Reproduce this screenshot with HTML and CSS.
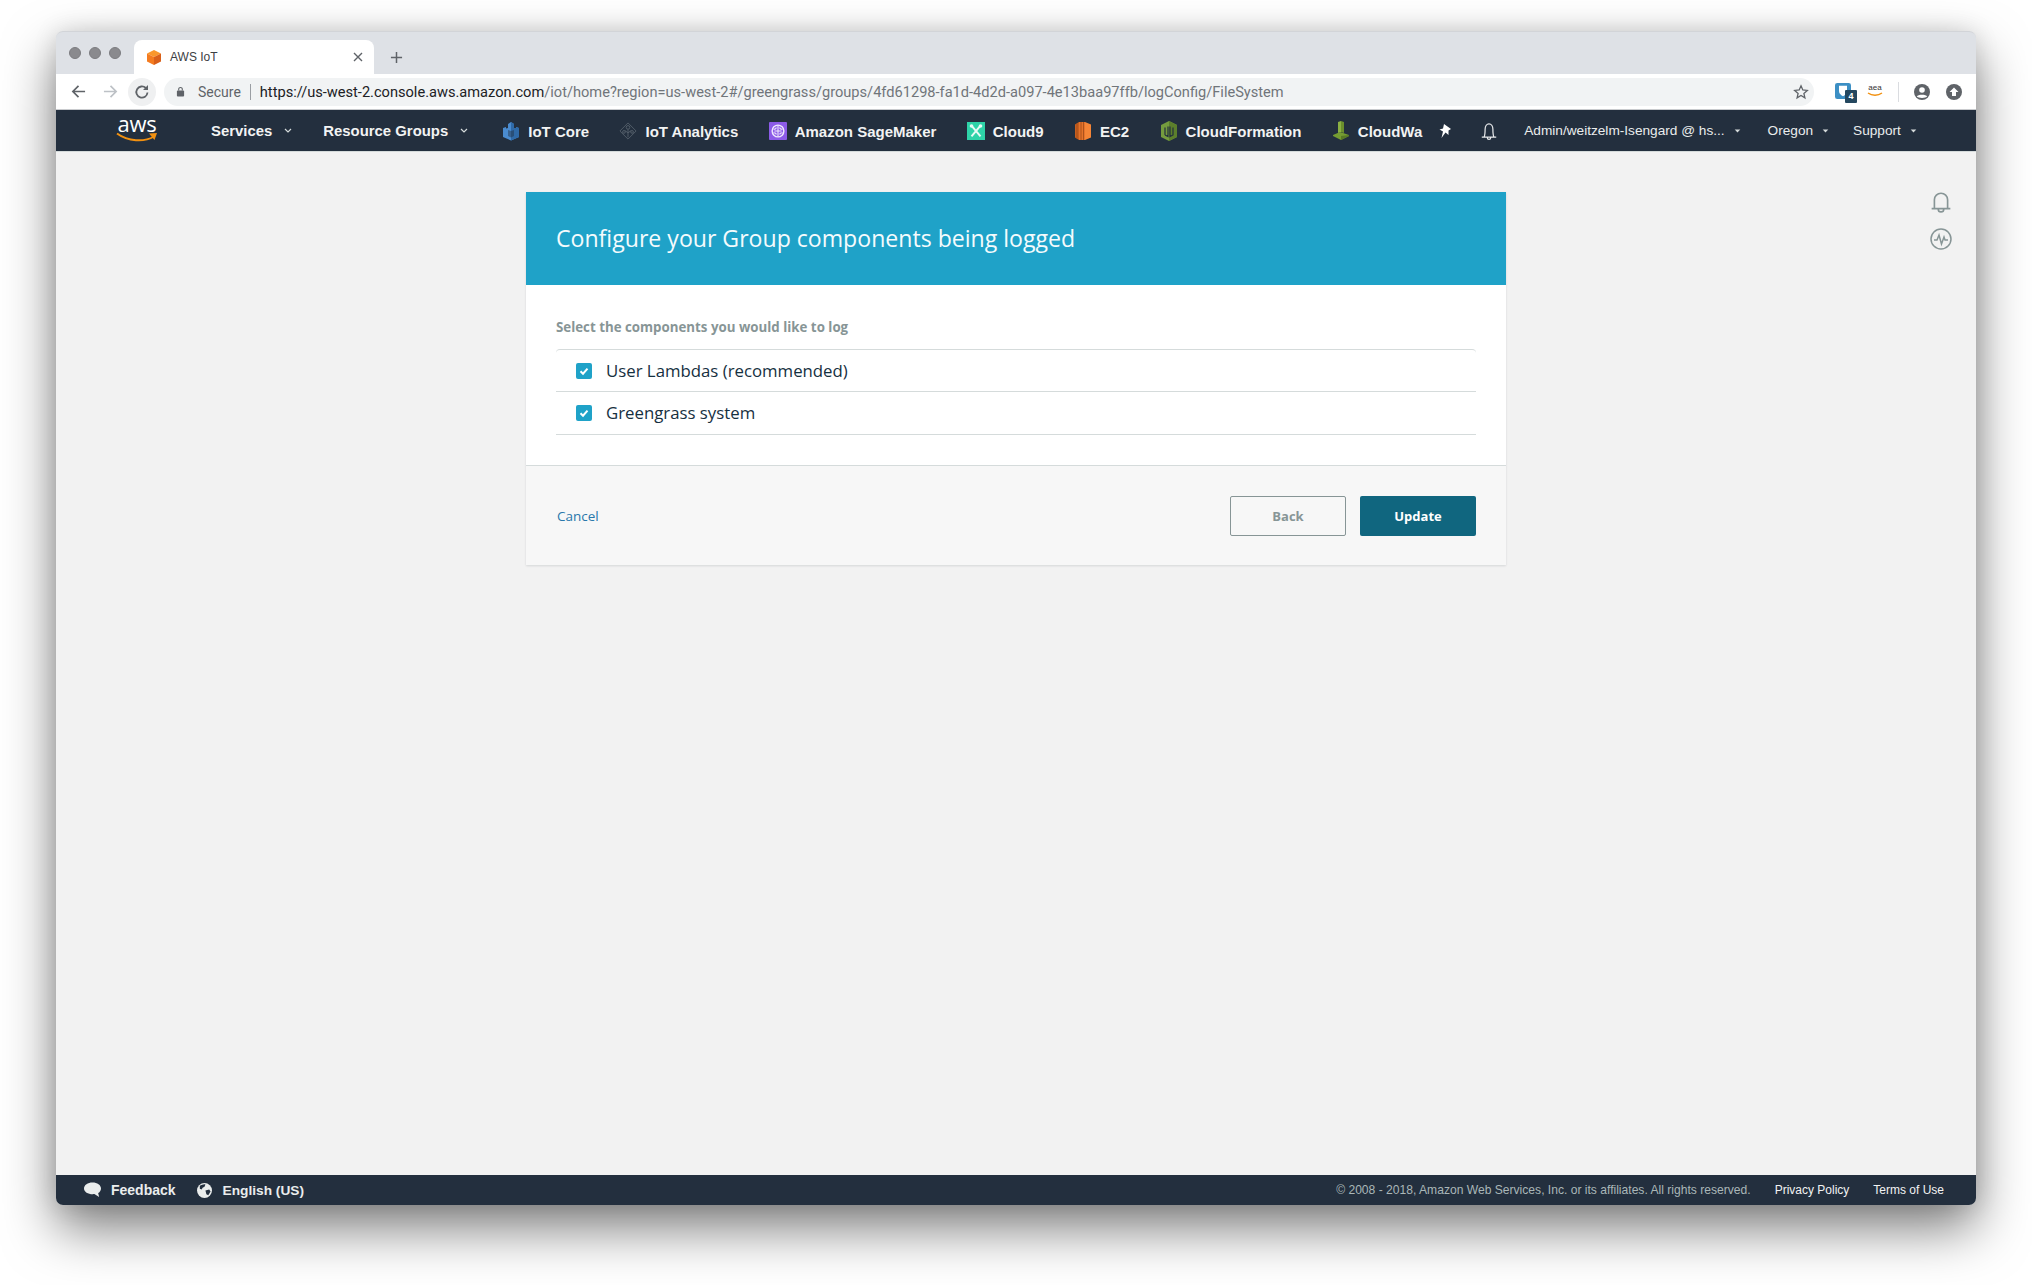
FILE: index.html
```html
<!DOCTYPE html>
<html lang="en">
<head>
<meta charset="utf-8">
<title>AWS IoT</title>
<link rel="stylesheet" href="styles.css">
</head>
<body>
<div class="window">
  <div class="tabstrip">
    <div class="dots"><i></i><i></i><i></i></div>
    <div class="tab">
      <svg class="favicon" viewBox="0 0 16 16"><path d="M8 0.500 15 4 8 7.500 1 4z" fill="#f9972c"/><path d="M1 4 8 7.500V15.500L1 12z" fill="#f47b20"/><path d="M15 4 8 7.500V15.500L15 12z" fill="#d9601a"/></svg>
      <span class="tab-title">AWS IoT</span>
      <svg class="tab-close" viewBox="0 0 10 10"><path d="M1 1 9 9M9 1 1 9" stroke="#5f6368" stroke-width="1.400" fill="none"/></svg>
    </div>
    <svg class="newtab" viewBox="0 0 14 14"><path d="M7 1v12M1 7h12" stroke="#5f6368" stroke-width="1.600" fill="none"/></svg>
  </div>

  <div class="toolbar">
    <svg class="tb-icon" viewBox="0 0 16 16"><path d="M15 8H2M8 2 2 8l6 6" stroke="#5f6368" stroke-width="1.800" fill="none"/></svg>
    <svg class="tb-icon fwd" viewBox="0 0 16 16"><path d="M1 8h13M8 2l6 6-6 6" stroke="#bdc1c6" stroke-width="1.800" fill="none"/></svg>
    <div class="reload"><svg viewBox="0 0 16 16"><path d="M13.500 8.500A5.600 5.600 0 1 1 11.800 4" stroke="#5f6368" stroke-width="1.800" fill="none"/><path d="M14 1v5H9z" fill="#5f6368"/></svg></div>
    <div class="omnibox">
      <svg class="lock" viewBox="0 0 10 12"><path d="M3 5V3.500a2 2 0 0 1 4 0V5" stroke="#5f6368" stroke-width="1.200" fill="none"/><rect x="1" y="5" width="8" height="6.500" rx="1" fill="#5f6368"/></svg>
      <span class="secure">Secure</span>
      <span class="omni-sep"></span>
      <span class="url"><span class="url-host">https://us-west-2.console.aws.amazon.com</span>/iot/home?region=us-west-2#/greengrass/groups/4fd61298-fa1d-4d2d-a097-4e13baa97ffb/logConfig/FileSystem</span>
      <svg class="star" viewBox="0 0 16 16"><path d="M8 1.800 9.800 6l4.500.400-3.400 3 1 4.400L8 11.500l-3.900 2.300 1-4.400-3.400-3L6.200 6z" stroke="#5f6368" stroke-width="1.300" fill="none"/></svg>
    </div>
    <div class="ext">
      <svg class="ext-shield" viewBox="0 0 14 14"><rect width="14" height="14" rx="2" fill="#3c8fc4"/><path d="M3.500 2.500h7V7c0 2.500-2 3.800-3.500 4.500C5.500 10.800 3.500 9.500 3.500 7z" fill="#fff"/></svg>
      <span class="ext-badge">4</span>
    </div>
    <div class="ext-aea"><span>aea</span><svg viewBox="0 0 16 5"><path d="M1 1c4 3 10 3 14 0" stroke="#f29111" stroke-width="1.400" fill="none"/></svg></div>
    <span class="tb-sep"></span>
    <svg class="tb-round" viewBox="0 0 16 16"><circle cx="8" cy="8" r="8" fill="#5f6368"/><circle cx="8" cy="6" r="2.800" fill="#fff"/><path d="M2.800 12.600c1-2.600 9.400-2.600 10.400 0C11.800 14.400 4.200 14.400 2.800 12.600z" fill="#fff"/></svg>
    <svg class="tb-round up" viewBox="0 0 16 16"><circle cx="8" cy="8" r="8" fill="#5f6368"/><path d="M8 3.500 12.500 8H10v4H6V8H3.500z" fill="#fff"/></svg>
  </div>

  <nav class="nav">
    <div class="aws-logo">
      <span class="aws-word">aws</span>
      <svg viewBox="0 0 42 11"><path d="M1 1.500c11 8 27 9 37 3" stroke="#f29111" stroke-width="2" fill="none"/><path d="M33 1.500 41 1l-2.500 7z" fill="#f29111"/></svg>
    </div>
    <a class="nav-menu services">Services<svg class="caret" viewBox="0 0 8 5"><path d="M1 1l3 3 3-3" stroke="#d5dbdb" stroke-width="1.200" fill="none"/></svg></a>
    <a class="nav-menu groups">Resource Groups<svg class="caret" viewBox="0 0 8 5"><path d="M1 1l3 3 3-3" stroke="#d5dbdb" stroke-width="1.200" fill="none"/></svg></a>

    <div class="pins">
      <a class="pin"><svg viewBox="0 0 18 20"><path d="M1 7l3-1v1.500l2-.500V3l3-2 3 2v4l2 .500V6l3 1v9l-8 3.500L1 16z" fill="#4a8bcf"/><path d="M9 1v18.500l8-3.500V7l-3-1v1.500L12 7V3z" fill="#2f6aa8"/><path d="M6 9l3 1 3-1v6l-3 1.500L6 15z" fill="#232f3e" opacity=".45"/></svg>IoT Core</a>
      <a class="pin"><svg viewBox="0 0 20 20"><path d="M10 1 19 10l-9 9-9-9z" fill="none" stroke="#56616c" stroke-width="1"/><circle cx="10" cy="6" r="2" fill="none" stroke="#56616c"/><circle cx="5.500" cy="11" r="1.500" fill="none" stroke="#56616c"/><circle cx="14.500" cy="11" r="1.500" fill="none" stroke="#56616c"/><path d="M10 8v9M6.500 9.500 10 12M13.500 9.500 10 12" fill="none" stroke="#56616c"/></svg>IoT Analytics</a>
      <a class="pin"><svg viewBox="0 0 20 20"><rect width="20" height="20" rx="1" fill="#8c5be8"/><circle cx="10" cy="10" r="6.500" fill="none" stroke="#efe8fd" stroke-width="1.600"/><path d="M10 4v12M5 8c3 0 3-2 3-2M15 8c-3 0-3-2-3-2M5 12c3 0 3 2 3 2M15 12c-3 0-3 2-3 2M6 10h8" fill="none" stroke="#efe8fd" stroke-width="1.200"/></svg>Amazon SageMaker</a>
      <a class="pin"><svg viewBox="0 0 20 20"><rect width="20" height="20" fill="#2ed3a8"/><path d="M5 4l10 12M15 4 5 16" stroke="#e8fbf5" stroke-width="2.200" fill="none"/><circle cx="5" cy="4.500" r="2" fill="#e8fbf5"/><circle cx="15" cy="4.500" r="2" fill="#e8fbf5"/></svg>Cloud9</a>
      <a class="pin"><svg viewBox="0 0 18 20"><path d="M5 1 1 3.500v13L5 19z" fill="#c85f1f"/><path d="M5 1h6v18H5z" fill="#e5732b"/><path d="M11 1l6 2.500v13L11 19z" fill="#f58536"/><path d="M3 2.500v15M7 1v18M9.500 1v18" stroke="#9c4a18" stroke-width=".8"/></svg>EC2</a>
      <a class="pin"><svg viewBox="0 0 18 20"><path d="M9 0 17 4v12l-8 4-8-4V4z" fill="#759c3e"/><path d="M9 0v20l8-4V4z" fill="#5c7f2c"/><path d="M5 6.500v7.500M5 14l3 1.500V5.500M10 5.500V15.500l3-1.500V6.500" fill="none" stroke="#232f3e" stroke-width="1.200"/></svg>CloudFormation</a>
      <a class="pin"><svg viewBox="0 0 18 20"><path d="M6 1l3-1v11l-3 1z" fill="#8bb043"/><path d="M9 0l3 1v11l-3-1z" fill="#6b8f2c"/><path d="M1 14l7-3 9 3v1l-8 4-8-4z" fill="#759c32"/><path d="M9 15l8-1v1l-8 4z" fill="#587a25"/></svg><span>CloudWa</span></a>
    </div>

    <svg class="nav-pin" viewBox="0 0 14 16"><path d="M6 1 13 6 10.500 7.500 10.500 12 7.500 9.500 3.500 15 5 8.500 1.500 6.500 5 5.500z" fill="#fff"/></svg>
    <svg class="nav-bell" viewBox="0 0 16 18"><path d="M1.500 14.500h13M3.500 14.500c1-1.500 1-3.500 1-7a3.500 5 0 0 1 7 0c0 3.500 0 5.500 1 7M6.500 15a1.500 1.500 0 0 0 3 0" stroke="#e8eaec" stroke-width="1.100" fill="none"/></svg>
    <a class="nav-user account">Admin/weitzelm-Isengard @ hs...<svg class="tri" viewBox="0 0 8 5"><path d="M0.500 0.500h7L4 4.500z" fill="#d5dbdb"/></svg></a>
    <a class="nav-user region">Oregon<svg class="tri" viewBox="0 0 8 5"><path d="M0.500 0.500h7L4 4.500z" fill="#d5dbdb"/></svg></a>
    <a class="nav-user support">Support<svg class="tri" viewBox="0 0 8 5"><path d="M0.500 0.500h7L4 4.500z" fill="#d5dbdb"/></svg></a>
  </nav>

  <main class="content">
    <div class="card">
      <h1 class="card-head">Configure your Group components being logged</h1>
      <div class="card-body">
        <div class="field-label">Select the components you would like to log</div>
        <div class="check-list">
          <div class="check-row"><span class="check"><svg viewBox="0 0 16 16"><path d="M4.500 8.300 7 10.700l4.500-5" stroke="#fff" stroke-width="2" fill="none"/></svg></span>User Lambdas (recommended)</div>
          <div class="check-row tall"><span class="check"><svg viewBox="0 0 16 16"><path d="M4.500 8.300 7 10.700l4.500-5" stroke="#fff" stroke-width="2" fill="none"/></svg></span>Greengrass system</div>
        </div>
      </div>
      <div class="card-foot">
        <a class="cancel">Cancel</a>
        <div class="actions">
          <button class="btn btn-back">Back</button>
          <button class="btn btn-update">Update</button>
        </div>
      </div>
    </div>
    <div class="side-icons">
      <svg viewBox="0 0 20 20"><path d="M1.500 16h17M4 16V8a6 6 0 0 1 12 0v8M7.500 16.500a2.500 2.500 0 0 0 5 0" stroke="#879596" stroke-width="1.500" fill="none"/></svg>
      <svg viewBox="0 0 22 22"><circle cx="11" cy="11" r="10" stroke="#879596" stroke-width="1.500" fill="none"/><path d="M4 12h3l2-5 2.500 9L14 9l1 3h3" stroke="#879596" stroke-width="1.500" fill="none"/></svg>
    </div>
  </main>

  <footer class="foot">
    <svg class="foot-icon chat" viewBox="0 0 18 16"><path d="M9 0c5 0 9 2.800 9 6.300 0 2.300-1.500 4-3 5l1 4-5-3c-6 .600-11-2-11-6C0 2.800 4 0 9 0z" fill="#eaeded"/></svg>
    <a class="foot-link feedback">Feedback</a>
    <svg class="foot-icon globe" viewBox="0 0 16 16"><circle cx="8" cy="8" r="8" fill="#eaeded"/><path d="M3 3c2-1 4-2 6-1.500L8 4 6 5 5 7 3 6zM9 8l4-1 1.500 2-2.500 4-2-1z" fill="#232f3e"/></svg>
    <a class="foot-link lang">English (US)</a>
    <span class="copyright">© 2008 - 2018, Amazon Web Services, Inc. or its affiliates. All rights reserved.</span>
    <a class="foot-legal privacy">Privacy Policy</a>
    <a class="foot-legal terms">Terms of Use</a>
  </footer>
</div>
</body>
</html>
```
FILE: styles.css
```css
* { box-sizing: border-box; }
html, body { margin: 0; height: 100%; background: #fff; }
body { padding: 31px 56px 0; overflow: hidden; font-family: "Liberation Sans", Arial, sans-serif; }
svg { display: block; flex: none; }
a { text-decoration: none; }

.window {
  width: 1920px; height: 1174px; display: flex; flex-direction: column;
  border-radius: 7px; background: #f2f2f2;
  box-shadow: 0 24px 52px rgba(0,0,0,.5), 0 0 24px rgba(0,0,0,.12);
}

/* tab strip */
.tabstrip {
  height: 43px; flex: none; display: flex; align-items: flex-end; background: #dee1e6;
  border-radius: 7px 7px 0 0; border-top: 1px solid #d2d4d8;
}
.dots { display: flex; gap: 8px; margin: 0 0 15px 13px; width: 65px; }
.dots i { width: 12px; height: 12px; border-radius: 50%; background: #8a8a8e; border: 1px solid #7c7c80; }
.tab {
  width: 240px; height: 34px; background: #fff; border-radius: 8px 8px 0 0;
  display: flex; align-items: center; padding: 0 11px 0 12px; color: #3c4043;
}
.favicon { width: 16px; height: 17px; margin-right: 8px; }
.tab-title { flex: 1; font-size: 12px; }
.tab-close { width: 10px; height: 10px; }
.newtab { width: 13px; height: 13px; margin: 0 0 10px 16px; }

/* toolbar */
.toolbar {
  height: 36px; flex: none; background: #fff; display: flex; align-items: center;
  padding: 0 13px 0 15px; border-bottom: 1px solid #c9cbce;
}
.tb-icon { width: 15px; height: 15px; }
.fwd { margin-left: 17px; }
.reload { width: 28px; height: 28px; border-radius: 50%; background: #eff0f1; margin-left: 10px; display: flex; align-items: center; justify-content: center; }
.reload svg { width: 16px; height: 16px; }
.omnibox {
  width: 1650px; height: 28px; margin-left: 8px; background: #f1f3f4; border-radius: 14px;
  display: flex; align-items: center; padding: 0 5px 0 12px; color: #5f6368;
}
.lock { width: 9px; height: 11px; margin-right: 13px; }
.secure { font: 14px Roboto, sans-serif; }
.omni-sep { width: 1px; height: 16px; background: #9a9ea3; margin: 0 9px 0 9px; }
.url { flex: 1; font: 14.620px Roboto, sans-serif; color: #70757a; white-space: nowrap; }
.url-host { color: #202124; }
.star { width: 16px; height: 16px; }
.ext { position: relative; width: 18px; height: 18px; margin-left: 21px; }
.ext-shield { width: 16px; height: 16px; }
.ext-badge {
  position: absolute; left: 10px; top: 7px; width: 12px; height: 13px; background: #24475f; color: #fff;
  font-size: 9px; font-weight: bold; text-align: center; line-height: 13px; border-radius: 1px;
}
.ext-aea { width: 16px; margin-left: 14px; text-align: center; color: #333; font-size: 8px; line-height: 8px; margin-bottom: 3px; }
.ext-aea svg { width: 16px; height: 5px; }
.tb-sep { width: 1px; height: 20px; background: #dadce0; margin: 0 15px 0 15px; }
.tb-round { width: 16px; height: 16px; }
.up { margin-left: 16px; }

/* nav */
.nav {
  height: 42px; flex: none; background: #232f3e; display: flex; align-items: center; color: #fff;
  padding-left: 60px; border-bottom: 1px solid #d5dbdb; white-space: nowrap;
}
.aws-logo { width: 42px; height: 30px; color: #fff; margin-top: -3px; }
.aws-word { display: block; text-align: center; font: 22px/18px "Open Sans", sans-serif; letter-spacing: -.3px; }
.aws-logo svg { width: 42px; height: 11px; }
.nav-menu { display: flex; align-items: center; color: #f2f3f3; font-weight: bold; font-size: 14.900px; }
.caret { width: 8px; height: 5px; margin-left: 12px; }
.services { margin-left: 53px; }
.groups { margin-left: 31px; }
.pins { display: flex; align-items: center; gap: 30.400px; margin-left: 34px; width: 919px; padding-top: 1px; }
.pin { display: flex; align-items: center; gap: 8px; color: #f2f3f3; font-weight: bold; font-size: 15px; flex: none; }
.pin svg { width: 18px; height: 20px; }
.nav-pin { width: 14px; height: 16px; margin-left: 17px; }
.nav-bell { width: 18px; height: 20px; margin-left: 28px; }
.nav-user { display: flex; align-items: center; color: #eaeded; font-size: 13.650px; }
.tri { width: 7px; height: 4px; margin-left: 9px; }
.account { margin-left: 26px; }
.region { margin-left: 27px; }
.support { margin-left: 24px; }

/* content */
.content { flex: 1; position: relative; display: flex; justify-content: center; align-items: flex-start; padding-top: 40px; background: #f2f2f2; }
.card { width: 980px; background: #fff; box-shadow: 0 1px 2px rgba(0,28,36,.12); }
.card-head {
  margin: 0; height: 93px; background: #1fa2c8; color: #f4fbfd; display: flex; align-items: center;
  padding: 0 0 2px 30px; font: 400 23.100px "Open Sans", sans-serif;
}
.card-body { height: 181px; padding: 33px 30px 0; border-bottom: 1px solid #d5dbdb; }
.field-label { font: 700 13.300px/18px "Open Sans", sans-serif; color: #879596; margin-bottom: 13px; }
.check-list { border-top: 1px solid #d5dbdb; border-radius: 4px; }
.check-row {
  height: 42px; display: flex; align-items: center; padding-left: 20px; border-bottom: 1px solid #d5dbdb;
  font: 400 16.800px "Open Sans", sans-serif; color: #16303f;
}
.tall { height: 43px; padding-bottom: 1px; }
.check { width: 16px; height: 16px; border-radius: 2px; background: #1fa2c8; margin-right: 14px; }
.card-foot { height: 99px; background: #f7f7f7; display: flex; align-items: center; justify-content: space-between; padding: 0 30px; }
.cancel { color: #2a78ab; font: 400 13.500px "Open Sans", sans-serif; margin-left: 1px; }
.actions { display: flex; gap: 14px; }
.btn { width: 116px; height: 40px; border-radius: 2px; font: 700 13px "Open Sans", sans-serif; }
.btn-back { background: transparent; border: 1px solid #879596; color: #879596; }
.btn-update { background: #10667f; border: 0; color: #fff; }
.side-icons { position: absolute; right: 24px; top: 39px; display: flex; flex-direction: column; align-items: center; gap: 15px; }
.side-icons svg { width: 22px; height: 22px; }

/* footer */
.foot {
  height: 30px; flex: none; background: #232f3e; border-radius: 0 0 7px 7px; display: flex; align-items: center;
  padding: 0 32px 0 28px; color: #eaeded; white-space: nowrap;
}
.foot-icon { width: 17px; height: 16px; }
.foot-link { color: #eaeded; font-weight: bold; font-size: 14px; }
.feedback { margin-left: 10px; }
.globe { width: 15px; height: 15px; margin-left: 21px; }
.lang { margin-left: 11px; font-size: 13.700px; }
.copyright { margin-left: auto; color: #aab7b8; font-size: 12.100px; }
.foot-legal { color: #f2f3f3; font-size: 12px; }
.privacy { margin-left: 24px; }
.terms { margin-left: 24px; }
```
